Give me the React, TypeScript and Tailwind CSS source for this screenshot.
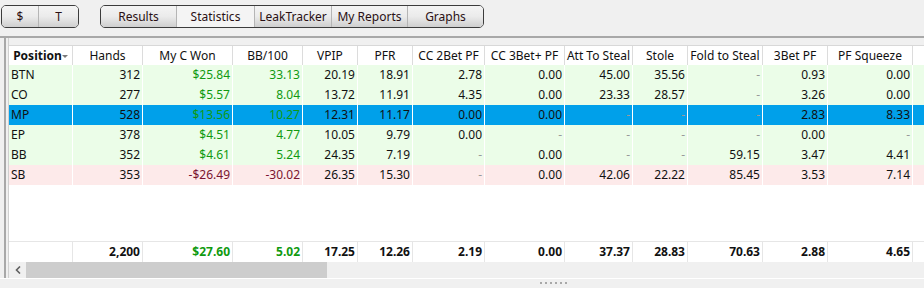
const cols = [
  { label: 'Position', w: 64 },
  { label: 'Hands', w: 70 },
  { label: 'My C Won', w: 90 },
  { label: 'BB/100', w: 70 },
  { label: 'VPIP', w: 55 },
  { label: 'PFR', w: 55 },
  { label: 'CC 2Bet PF', w: 72 },
  { label: 'CC 3Bet+ PF', w: 80 },
  { label: 'Att To Steal', w: 68 },
  { label: 'Stole', w: 55 },
  { label: 'Fold to Steal', w: 75 },
  { label: '3Bet PF', w: 65 },
  { label: 'PF Squeeze', w: 85 },
]

type Row = { pos: string; kind: 'win' | 'loss' | 'sel'; cells: string[] }

const rows: Row[] = [
  { pos: 'BTN', kind: 'win', cells: ['312', '$25.84', '33.13', '20.19', '18.91', '2.78', '0.00', '45.00', '35.56', '-', '0.93', '0.00'] },
  { pos: 'CO', kind: 'win', cells: ['277', '$5.57', '8.04', '13.72', '11.91', '4.35', '0.00', '23.33', '28.57', '-', '3.26', '0.00'] },
  { pos: 'MP', kind: 'sel', cells: ['528', '$13.56', '10.27', '12.31', '11.17', '0.00', '0.00', '-', '-', '-', '2.83', '8.33'] },
  { pos: 'EP', kind: 'win', cells: ['378', '$4.51', '4.77', '10.05', '9.79', '0.00', '-', '-', '-', '-', '0.00', '-'] },
  { pos: 'BB', kind: 'win', cells: ['352', '$4.61', '5.24', '24.35', '7.19', '-', '0.00', '-', '-', '59.15', '3.47', '4.41'] },
  { pos: 'SB', kind: 'loss', cells: ['353', '-$26.49', '-30.02', '26.35', '15.30', '-', '0.00', '42.06', '22.22', '85.45', '3.53', '7.14'] },
]

const totals = ['2,200', '$27.60', '5.02', '17.25', '12.26', '2.19', '0.00', '37.37', '28.83', '70.63', '2.88', '4.65']

const gridCols = 'grid grid-cols-[64px_70px_90px_70px_55px_55px_72px_80px_68px_55px_75px_65px_85px_1fr]'

function ToolButton({ label, w, selected, first, last }: { label: string; w: number; selected?: boolean; first?: boolean; last?: boolean }) {
  return (
    <div
      style={{ width: w }}
      className={`flex h-full items-center justify-center border-r border-[#b5b5b5] text-[12px] text-[#2a1014] last:border-r-0 ${
        selected ? 'bg-[#f4f4f4]' : 'bg-gradient-to-b from-[#f4f4f4] via-[#ebebeb] to-[#cfcfcf]'
      } ${first ? 'rounded-l-[4px]' : ''} ${last ? 'rounded-r-[4px]' : ''}`}
    >
      {label}
    </div>
  )
}

// i is the index into row.cells (0 = Hands, 1 = My C Won, 2 = BB/100)
function cellColor(i: number, value: string, kind: Row['kind']) {
  if (value === '-') return 'text-[#9a9a9a]'
  if (i === 1 || i === 2) return kind === 'loss' ? 'text-[#7a1430]' : 'text-[#109a10]'
  return 'text-[#111]'
}

export default function App() {
  return (
    <div className="flex h-[288px] w-[924px] flex-col overflow-hidden bg-[#f0f0f0] font-['Noto_Sans','Liberation_Sans',sans-serif] text-[12px]">
      {/* Toolbar */}
      <div className="flex h-[36px] items-start pt-[5px]">
        <div className="ml-[1px] flex h-[23px] rounded-[5px] border border-[#3c3c3c]">
          <ToolButton label="$" w={37} first />
          <ToolButton label="T" w={39} last />
        </div>
        <div className="ml-[21px] flex h-[23px] rounded-[5px] border border-[#3c3c3c]">
          <ToolButton label="Results" w={76} first />
          <ToolButton label="Statistics" w={78} selected />
          <ToolButton label="LeakTracker" w={77} />
          <ToolButton label="My Reports" w={76} />
          <ToolButton label="Graphs" w={75} last />
        </div>
      </div>

      {/* Frame */}
      <div className="flex flex-1 flex-col border-t-2 border-[#a8a8a8]">
        <div className="flex flex-1 pl-[4px]">
          <div className="flex flex-1 border-l-2 border-[#a8a8a8] pl-[2px]">
            <div className="flex flex-1 flex-col border-l border-[#d0d0d0]">
              <div className="h-[7px]" />
              {/* Header */}
              <div className={`${gridCols} h-[20px] border-t border-[#d8d8d8] bg-white`}>
                {cols.map((c, i) => (
                  <div key={c.label} className="flex items-center justify-center border-r border-[#dcdcdc] text-[#111]">
                    {i === 0 ? (
                      <span className="flex items-center font-bold">
                        {c.label}
                        <svg width="6" height="4" viewBox="0 0 6 4" className="mt-[3px]">
                          <path d="M0 0h6L3 3z" fill="#7a7a7a" />
                        </svg>
                      </span>
                    ) : (
                      c.label
                    )}
                  </div>
                ))}
                <div />
              </div>

              {/* Rows */}
              <div className="flex flex-1 flex-col bg-white">
                {rows.map((r) => (
                  <div
                    key={r.pos}
                    className={`${gridCols} h-[20px] ${
                      r.kind === 'sel' ? 'bg-[#00a0ea]' : r.kind === 'loss' ? 'bg-[#fdeaea]' : 'bg-[#ebfde8]'
                    }`}
                  >
                    <div className="flex items-center border-r border-white pl-[2px] text-[#111]">{r.pos}</div>
                    {r.cells.map((v, i) => (
                      <div
                        key={i}
                        className={`flex items-center justify-end border-r border-white pr-[2px] ${cellColor(i, v, r.kind)}`}
                      >
                        {v}
                      </div>
                    ))}
                    <div />
                  </div>
                ))}
                <div className="flex-1" />
                {/* Totals */}
                <div className={`${gridCols} h-[21px] border-t border-[#e6e6e6] font-bold`}>
                  <div className="border-r border-[#e6e6e6]" />
                  {totals.map((v, i) => (
                    <div
                      key={i}
                      className={`flex items-center justify-end border-r border-[#e6e6e6] pr-[2px] ${
                        i === 1 || i === 2 ? 'text-[#109a10]' : 'text-[#111]'
                      }`}
                    >
                      {v}
                    </div>
                  ))}
                  <div />
                </div>
              </div>

              {/* Scrollbar */}
              <div className="flex h-[16px] bg-[#f0f0f0]">
                <div className="flex w-[17px] items-center justify-center">
                  <svg width="6" height="8" viewBox="0 0 6 8">
                    <path d="M5 0.5L1.5 4L5 7.5" stroke="#606060" strokeWidth="1.6" fill="none" />
                  </svg>
                </div>
                <div className="w-[301px] bg-[#cdcdcd]" />
              </div>
            </div>
          </div>
        </div>
        {/* Bottom grip */}
        <div className="flex h-[10px] justify-center border-t border-white pl-[182px]">
          <div className="mt-[3px] flex gap-[3px]">
            {[0, 1, 2, 3, 4, 5].map((d) => (
              <div key={d} className="h-[2px] w-[2px] bg-[#a8a8a8]" />
            ))}
          </div>
        </div>
      </div>
    </div>
  )
}
